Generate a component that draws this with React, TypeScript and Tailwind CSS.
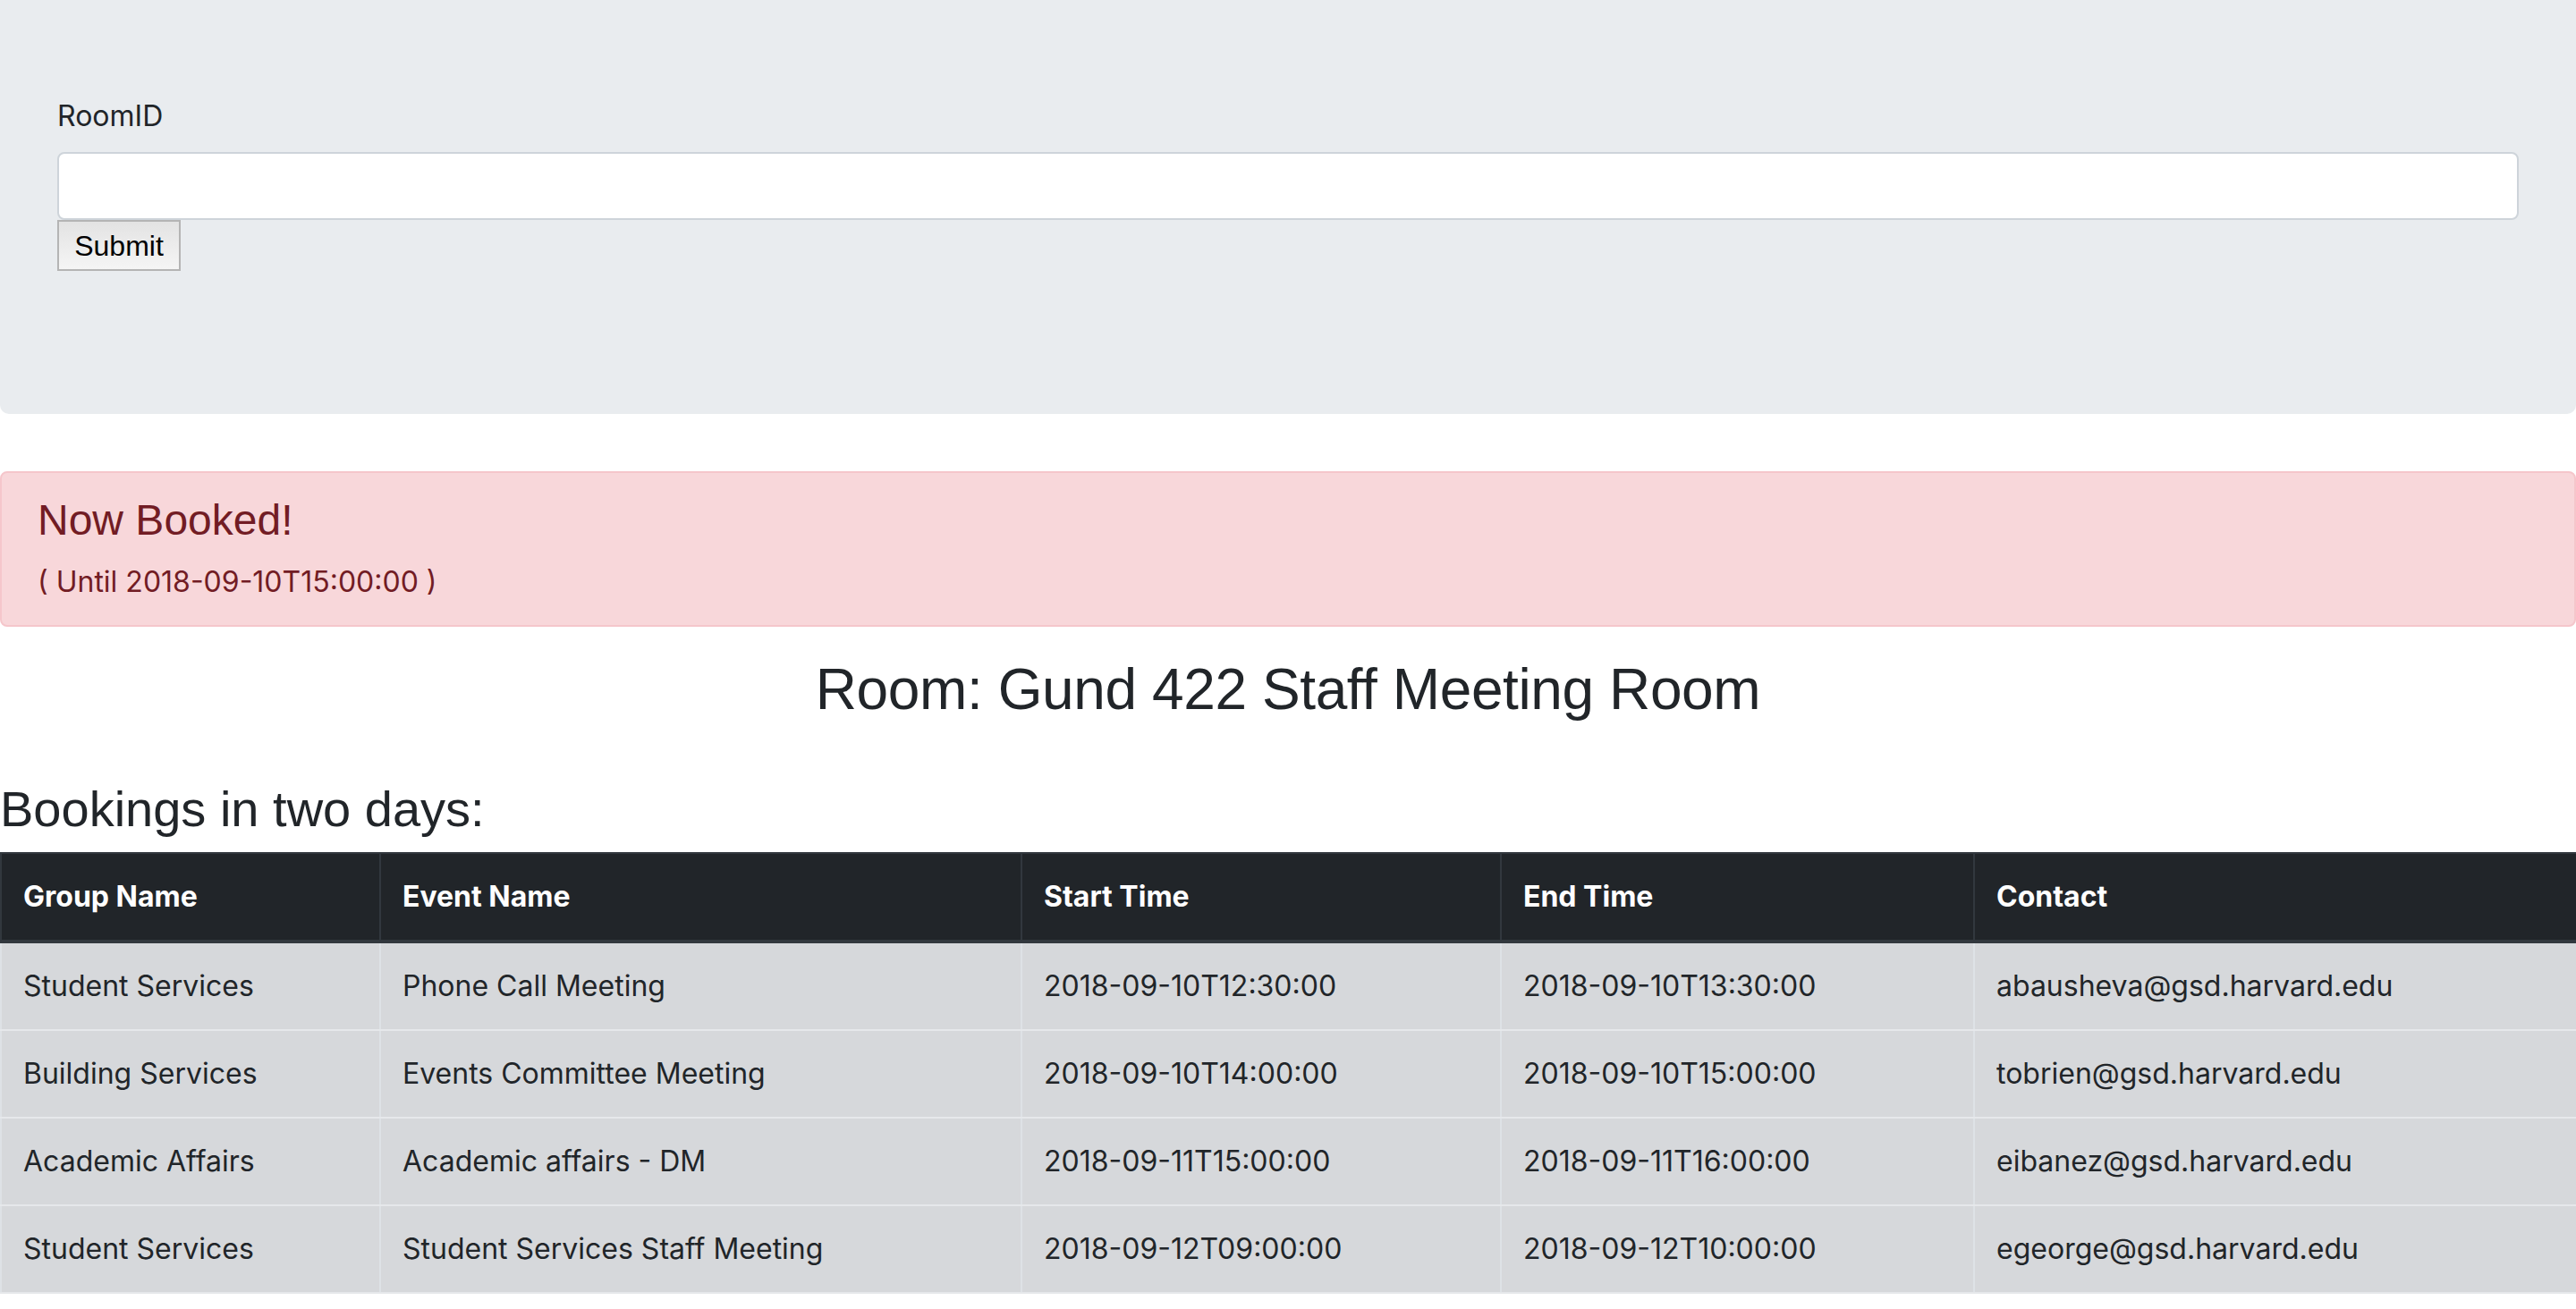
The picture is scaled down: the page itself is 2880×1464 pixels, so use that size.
import React from "react";

interface Booking {
  group: string;
  event: string;
  start: string;
  end: string;
  contact: string;
}

const bookings: Array<Booking> = [
  {
    group: "Student Services",
    event: "Phone Call Meeting",
    start: "2018-09-10T12:30:00",
    end: "2018-09-10T13:30:00",
    contact: "abausheva@gsd.harvard.edu",
  },
  {
    group: "Building Services",
    event: "Events Committee Meeting",
    start: "2018-09-10T14:00:00",
    end: "2018-09-10T15:00:00",
    contact: "tobrien@gsd.harvard.edu",
  },
  {
    group: "Academic Affairs",
    event: "Academic affairs - DM",
    start: "2018-09-11T15:00:00",
    end: "2018-09-11T16:00:00",
    contact: "eibanez@gsd.harvard.edu",
  },
  {
    group: "Student Services",
    event: "Student Services Staff Meeting",
    start: "2018-09-12T09:00:00",
    end: "2018-09-12T10:00:00",
    contact: "egeorge@gsd.harvard.edu",
  },
];

const columns = ["Group Name", "Event Name", "Start Time", "End Time", "Contact"];
const colWidths = ["w-[424px]", "w-[717px]", "w-[536px]", "w-[529px]", "w-[674px]"];

function RoomForm() {
  return (
    <div className="bg-[#e9ecef] rounded-b-[10px] px-[64px] pt-[106px] pb-[128px] mb-[64px]">
      <form className="mb-[32px]" onSubmit={(e) => e.preventDefault()}>
        <label className="block text-[32px] leading-[48px] mb-[16px] text-[#212529] font-['Inter',sans-serif]">
          RoomID
        </label>
        <input
          type="text"
          className="block w-full h-[76px] bg-white border-2 border-[#ced4da] rounded-[8px] px-[24px] text-[32px] outline-none"
        />
        <button
          type="submit"
          className="flex items-center justify-center w-[138px] h-[57px] border-2 border-[#b4b4b4] bg-linear-to-b from-[#e3e3e3] to-[#f5f5f5] text-black text-[32px] leading-[48px] font-['Liberation_Sans',Arial,sans-serif]"
        >
          Submit
        </button>
      </form>
    </div>
  );
}

function BookedAlert() {
  return (
    <div className="bg-[#f8d7da] border-2 border-[#f5c6cb] rounded-[8px] px-[40px] py-[24px] mb-[32px] text-[#721c24]">
      <h4 className="text-[48px] leading-[57.6px] mb-[16px] font-['Liberation_Sans',Arial,sans-serif]">
        Now Booked!
      </h4>
      <p className="text-[32px] leading-[48px] font-['Inter',sans-serif]">
        ( Until 2018-09-10T15:00:00 )
      </p>
    </div>
  );
}

function BookingTable() {
  return (
    <table className="w-full table-fixed border-collapse text-[32px] leading-[48px] font-['Inter',sans-serif]">
      <colgroup>
        {colWidths.map((w) => (
          <col key={w} className={w} />
        ))}
      </colgroup>
      <thead>
        <tr className="bg-[#212529] text-white">
          {columns.map((c) => (
            <th
              key={c}
              className="text-left font-bold px-[24px] py-[24px] border-2 border-b-4 border-[#32383e]"
            >
              {c}
            </th>
          ))}
        </tr>
      </thead>
      <tbody>
        {bookings.map((b, i) => (
          <tr key={i} className="bg-[#d6d8db] text-[#212529]">
            {[b.group, b.event, b.start, b.end, b.contact].map((v, j) => (
              <td
                key={j}
                className="px-[24px] py-[24px] border-2 border-[#dee2e6] border-b-[#e6e8eb] whitespace-nowrap"
              >
                {v}
              </td>
            ))}
          </tr>
        ))}
      </tbody>
    </table>
  );
}

export default function App() {
  return (
    <div className="w-[2880px] min-h-[1464px] bg-white text-[#212529] font-['Liberation_Sans',Arial,sans-serif]">
      <RoomForm />
      <BookedAlert />
      <h2 className="text-center text-[64px] leading-[76.8px] font-medium tracking-[-0.4px] mb-[16px]">
        Room: Gund 422 Staff Meeting Room
      </h2>
      <h3 className="text-[56px] leading-[67.2px] font-medium mt-[62px] mb-[14px]">
        Bookings in two days:
      </h3>
      <BookingTable />
    </div>
  );
}
